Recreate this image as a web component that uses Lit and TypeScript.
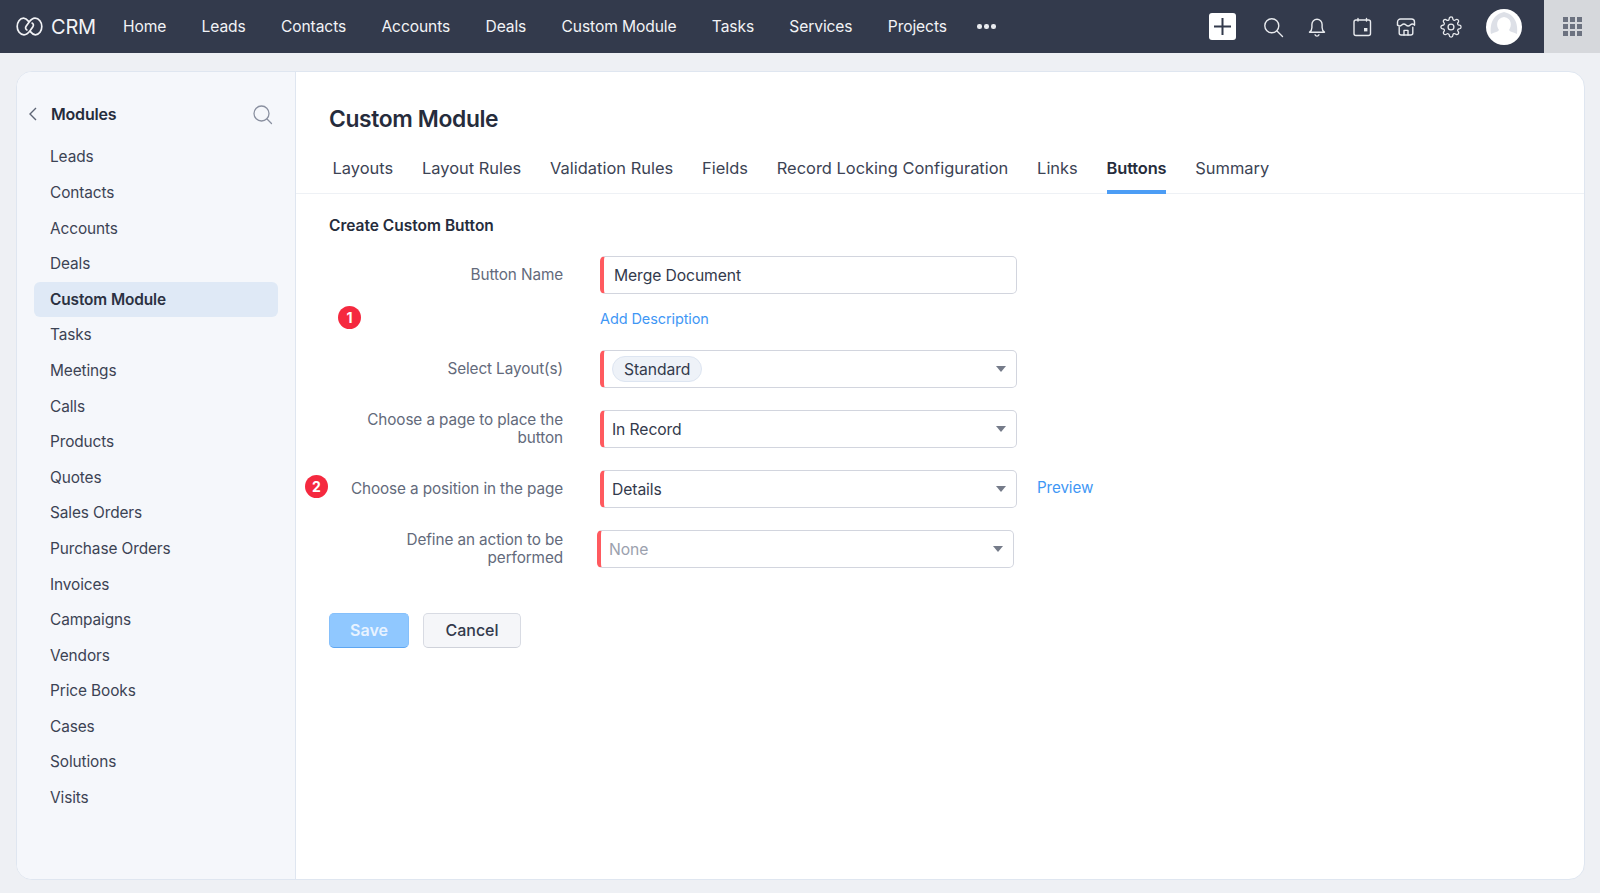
import { LitElement, css, html } from "lit";
import { customElement } from "lit/decorators.js";

const NAV = ["Home", "Leads", "Contacts", "Accounts", "Deals", "Custom Module", "Tasks", "Services", "Projects"];
const MODULES = ["Leads", "Contacts", "Accounts", "Deals", "Custom Module", "Tasks", "Meetings", "Calls", "Products", "Quotes", "Sales Orders", "Purchase Orders", "Invoices", "Campaigns", "Vendors", "Price Books", "Cases", "Solutions", "Visits"];
const TABS = ["Layouts", "Layout Rules", "Validation Rules", "Fields", "Record Locking Configuration", "Links", "Buttons", "Summary"];

const gear = "M19.4 15a1.65 1.65 0 0 0 .33 1.82l.06.06a2 2 0 0 1 0 2.83 2 2 0 0 1-2.83 0l-.06-.06a1.65 1.65 0 0 0-1.82-.33 1.65 1.65 0 0 0-1 1.51V21a2 2 0 0 1-2 2 2 2 0 0 1-2-2v-.09A1.65 1.65 0 0 0 9 19.4a1.65 1.65 0 0 0-1.82.33l-.06.06a2 2 0 0 1-2.83 0 2 2 0 0 1 0-2.83l.06-.06a1.65 1.65 0 0 0 .33-1.82 1.65 1.65 0 0 0-1.51-1H3a2 2 0 0 1-2-2 2 2 0 0 1 2-2h.09A1.65 1.65 0 0 0 4.6 9a1.65 1.65 0 0 0-.33-1.82l-.06-.06a2 2 0 0 1 0-2.83 2 2 0 0 1 2.83 0l.06.06a1.65 1.65 0 0 0 1.82.33H9a1.65 1.65 0 0 0 1-1.51V3a2 2 0 0 1 2-2 2 2 0 0 1 2 2v.09a1.65 1.65 0 0 0 1 1.51 1.65 1.65 0 0 0 1.82-.33l.06-.06a2 2 0 0 1 2.83 0 2 2 0 0 1 0 2.83l-.06.06a1.65 1.65 0 0 0-.33 1.82V9a1.65 1.65 0 0 0 1.51 1H21a2 2 0 0 1 2 2 2 2 0 0 1-2 2h-.09a1.65 1.65 0 0 0-1.51 1z";

@customElement("app-root")
export class AppRoot extends LitElement {
  static styles = css`
    :host {
      display: block;
      height: 893px;
      background: #eef0f4;
      font-family: Inter, "Noto Sans", sans-serif;
      color: #333a4c;
      overflow: hidden;
    }
    * { box-sizing: border-box; }

    /* top bar */
    .top {
      height: 53px;
      background: #333a4c;
      color: #f2f3f6;
      display: flex;
      align-items: center;
      padding-left: 16px;
    }
    .logo { display: block; width: 27px; height: 19px; margin-right: 8px; }
    .crm { font-size: 20px; letter-spacing: -0.2px; margin-right: 27px; }
    .nav { display: flex; align-items: center; gap: 35.3px; font-size: 15.6px; letter-spacing: -0.1px; }
    .dots { display: flex; gap: 2.5px; margin-left: -5px; }
    .dots i { width: 4.5px; height: 4.5px; border-radius: 50%; background: #e9ebef; }
    .spacer { flex: 1; }
    .plus {
      width: 27px;
      height: 27px;
      background: #fff;
      border-radius: 3px;
      display: flex;
      align-items: center;
      justify-content: center;
      margin-right: 25.6px;
    }
    .tools { display: flex; align-items: center; gap: 22.6px; margin-right: 24px; }
    .tools svg { display: block; width: 22px; height: 22px; fill: none; stroke: #e8eaee; stroke-width: 1.4; stroke-linecap: round; stroke-linejoin: round; }
    .avatar { display: block; width: 36px; height: 36px; margin-right: 22px; }
    .apps {
      width: 56px;
      height: 53px;
      background: #d6d8dc;
      display: flex;
      align-items: center;
      justify-content: center;
    }
    .apps-grid { display: grid; grid-template-columns: repeat(3, 5px); gap: 2px; }
    .apps-grid i { height: 5px; background: #6c7280; }

    /* card */
    .card {
      display: flex;
      height: 809px;
      margin: 18px 15px 0 16px;
      background: #fff;
      border: 1px solid #dfe6f0;
      border-radius: 16px;
      overflow: hidden;
    }
    .side {
      width: 279px;
      flex: none;
      background: #f5f7fb;
      border-right: 1px solid #dfe6f0;
      padding: 26px 17px 0;
    }
    .side-head {
      display: flex;
      align-items: center;
      height: 32px;
      margin-bottom: 9.4px;
      font-size: 16px;
      font-weight: 600;
      color: #262c3c;
      letter-spacing: -0.2px;
    }
    .side-head .back { display: block; width: 10px; height: 16px; margin-right: 13px; margin-left: -6px; fill: none; stroke: #5e6575; stroke-width: 1.4; }
    .side-head .find { display: block; width: 21px; height: 21px; margin-left: auto; margin-right: 5px; fill: none; stroke: #8a90a0; stroke-width: 1.3; stroke-linecap: round; }
    .mod {
      height: 35.6px;
      line-height: 35.6px;
      padding-left: 16px;
      font-size: 15.4px;
      color: #3c4354;
      border-radius: 6px;
      letter-spacing: -0.1px;
    }
    .mod.on { background: #dfe9f6; font-weight: 600; color: #2b3142; }

    /* main column */
    .main { flex: 1; min-width: 0; position: relative; }
    .title {
      margin: 0;
      padding: 29.5px 0 0 33px;
      height: 72px;
      font-size: 22.8px;
      line-height: 33px;
      font-weight: 600;
      color: #262c3c;
      letter-spacing: -0.35px;
    }
    .tabs {
      display: flex;
      gap: 28.8px;
      height: 50px;
      padding-left: 36.5px;
      border-bottom: 1px solid #eef1f5;
      font-size: 16.45px;
      color: #3c4354;
    }
    .tab { height: 50px; line-height: 48px; }
    .tab.on { font-weight: 600; color: #262c3c; border-bottom: 4px solid #4c9df5; border-radius: 3px 3px 0 0; letter-spacing: -0.15px; }
    .form { padding: 22px 0 0 33px; position: relative; }
    h2 { margin: 0 0 20px; font-size: 15.5px; line-height: 20px; font-weight: 600; color: #262c3c; }
    .row { display: grid; grid-template-columns: 251px 417px auto; column-gap: 20px; align-items: center; min-height: 38px; margin-bottom: 22px; }
    .row.tight { margin-bottom: 6px; }
    .label { padding-right: 17px; text-align: right; font-size: 15.3px; line-height: 18px; color: #636a7b; letter-spacing: -0.1px; }
    .field {
      height: 38px;
      display: flex;
      align-items: center;
      background: #fff;
      border: 1.5px solid #d2d5de;
      border-left: 4px solid #ff5a5f;
      border-radius: 5px;
      padding: 0 10px 0 8px;
      font-size: 15.7px;
      color: #333a4c;
      letter-spacing: -0.1px;
    }
    .field.text { padding-left: 10px; }
    .field.shift { margin-left: -3px; margin-right: 3px; }
    .field.empty { color: #9ba1ae; }
    .chip { padding: 0 11px; height: 26px; line-height: 25px; border-radius: 13px; background: #eef2f8; border: 1px solid #dde5f1; }
    .caret { margin-left: auto; width: 0; height: 0; border-left: 5.5px solid transparent; border-right: 5.5px solid transparent; border-top: 6px solid #757b89; }
    .link { color: #3f97f5; font-size: 15.2px; letter-spacing: -0.1px; margin-bottom: 3px; }
    .desc { margin: 0 0 0 271px; height: 50px; padding-top: 9px; line-height: 20px; font-size: 14.5px; }
    .actions { display: flex; gap: 14px; padding-top: 23px; }
    .btn { height: 35px; line-height: 33px; text-align: center; border-radius: 5px; font-size: 16px; font-weight: 500; }
    .save { width: 80px; font-weight: 600; color: #e8f3ff; background: #90c8ff; border: 1px solid #86c0fb; border-bottom-color: #5da6f2; }
    .cancel { width: 98px; color: #333a4c; background: #f5f6f9; border: 1.5px solid #d8dbe3; border-bottom-color: #cfd2da; }

    /* numbered callouts that sit over the form */
    .mark {
      position: absolute;
      width: 23px;
      height: 23px;
      border-radius: 50%;
      background: #f5293f;
      color: #fff;
      font-size: 14px;
      font-weight: 700;
      line-height: 23px;
      text-align: center;
    }
    .m1 { left: 42px; top: 112px; }
    .m2 { left: 9px; top: 281px; }
  `;

  field(value: string, opts: { caret?: boolean; chip?: boolean; shift?: boolean; empty?: boolean } = {}) {
    const cls = `field${opts.caret ? "" : " text"}${opts.shift ? " shift" : ""}${opts.empty ? " empty" : ""}`;
    return html`<div class=${cls}>
      ${opts.chip ? html`<span class="chip">${value}</span>` : html`<span>${value}</span>`}
      ${opts.caret ? html`<span class="caret"></span>` : ""}
    </div>`;
  }

  header() {
    return html`<header class="top">
      <svg class="logo" viewBox="0 0 27 19" fill="none" stroke="#f2f3f6" stroke-width="1.7" stroke-linecap="round">
        <path d="M12.6 4.4C11 2.4 9.4 1.2 7.6 1.2 3.8 1.2 1.2 5 1.2 9.5s2.8 8.3 6.8 8.3c2.9 0 4.7-2.2 6.2-4.3l2.7-3.8c.9-1.3.6-2.9-.8-3.6"/>
        <path d="M14.4 14.6c1.6 2 3.2 3.2 5 3.2 3.8 0 6.4-3.8 6.4-8.3S23 1.2 19 1.2c-2.9 0-4.7 2.2-6.2 4.3l-2.7 3.8c-.9 1.3-.6 2.9.8 3.6"/>
      </svg>
      <span class="crm">CRM</span>
      <nav class="nav">
        ${NAV.map((n) => html`<span>${n}</span>`)}
        <span class="dots"><i></i><i></i><i></i></span>
      </nav>
      <span class="spacer"></span>
      <span class="plus">
        <svg width="19" height="19" viewBox="0 0 19 19"><path d="M9.5 1v17M1 9.5h17" stroke="#333a4c" stroke-width="2"/></svg>
      </span>
      <div class="tools">
        <svg viewBox="0 0 22 22"><circle cx="9.8" cy="9.8" r="7"/><path d="M15 15l5.5 5.5"/></svg>
        <svg viewBox="0 0 22 22"><path d="M3.5 16.2c1.6-1 2.4-2.4 2.4-4.6V8.4a5.1 5.1 0 0 1 10.2 0v3.2c0 2.2.8 3.6 2.4 4.6z"/><path d="M9 18.8a2.2 2.2 0 0 0 4 0"/></svg>
        <svg viewBox="0 0 22 22"><rect x="3" y="4" width="16.5" height="15.5" rx="2"/><path d="M7 2.5v2.6M15.5 2.5v2.6"/><rect x="13" y="12" width="3.4" height="3.4" fill="#e8eaee" stroke="none"/></svg>
        <svg viewBox="0 0 22 22"><path d="M2.5 9V6a3 3 0 0 1 3-3h11a3 3 0 0 1 3 3v3"/><path d="M2.5 9q2.1 2 4.25 0t4.25 0 4.25 0 4.25 0"/><path d="M4.2 11.2V17a2 2 0 0 0 2 2h9.6a2 2 0 0 0 2-2v-5.8"/><path d="M9 19v-4.6h4V19"/></svg>
        <svg viewBox="0 0 24 24"><circle cx="12" cy="12" r="3.2"/><path d=${gear}/></svg>
      </div>
      <svg class="avatar" viewBox="0 0 36 36">
        <circle cx="18" cy="18" r="18" fill="#fff"/>
        <path d="M5 25 C4 18 5 6 18 3 C31 6 32 18 31 25 C27 23 24 23 23 21 C26 17 26 9 18 8 C10 9 10 17 13 21 C12 23 9 23 5 25z" fill="#dde0e7"/>
      </svg>
      <div class="apps"><div class="apps-grid">${Array.from({ length: 9 }, () => html`<i></i>`)}</div></div>
    </header>`;
  }

  sidebar() {
    return html`<aside class="side">
      <div class="side-head">
        <svg class="back" viewBox="0 0 10 16"><path d="M8 2L2 8l6 6"/></svg>
        <span>Modules</span>
        <svg class="find" viewBox="0 0 21 21"><circle cx="9.5" cy="9.5" r="7.5"/><path d="M15 15l4.5 4.5"/></svg>
      </div>
      ${MODULES.map((m) => html`<div class="mod ${m === "Custom Module" ? "on" : ""}">${m}</div>`)}
    </aside>`;
  }

  render() {
    return html`
      ${this.header()}
      <section class="card">
        ${this.sidebar()}
        <main class="main">
          <h1 class="title">Custom Module</h1>
          <div class="tabs">
            ${TABS.map((t) => html`<div class="tab ${t === "Buttons" ? "on" : ""}">${t}</div>`)}
          </div>
          <div class="form">
            <h2>Create Custom Button</h2>
            <div class="row tight">
              <div class="label">Button Name</div>
              ${this.field("Merge Document")}
            </div>
            <div class="link desc">Add Description</div>
            <div class="row">
              <div class="label">Select Layout(s)</div>
              ${this.field("Standard", { caret: true, chip: true })}
            </div>
            <div class="row">
              <div class="label">Choose a page to place the button</div>
              ${this.field("In Record", { caret: true })}
            </div>
            <div class="row">
              <div class="label">Choose a position in the page</div>
              ${this.field("Details", { caret: true })}
              <div class="link">Preview</div>
            </div>
            <div class="row">
              <div class="label">Define an action to be performed</div>
              ${this.field("None", { caret: true, shift: true, empty: true })}
            </div>
            <div class="actions">
              <div class="btn save">Save</div>
              <div class="btn cancel">Cancel</div>
            </div>
            <div class="mark m1">1</div>
            <div class="mark m2">2</div>
          </div>
        </main>
      </section>
    `;
  }
}
